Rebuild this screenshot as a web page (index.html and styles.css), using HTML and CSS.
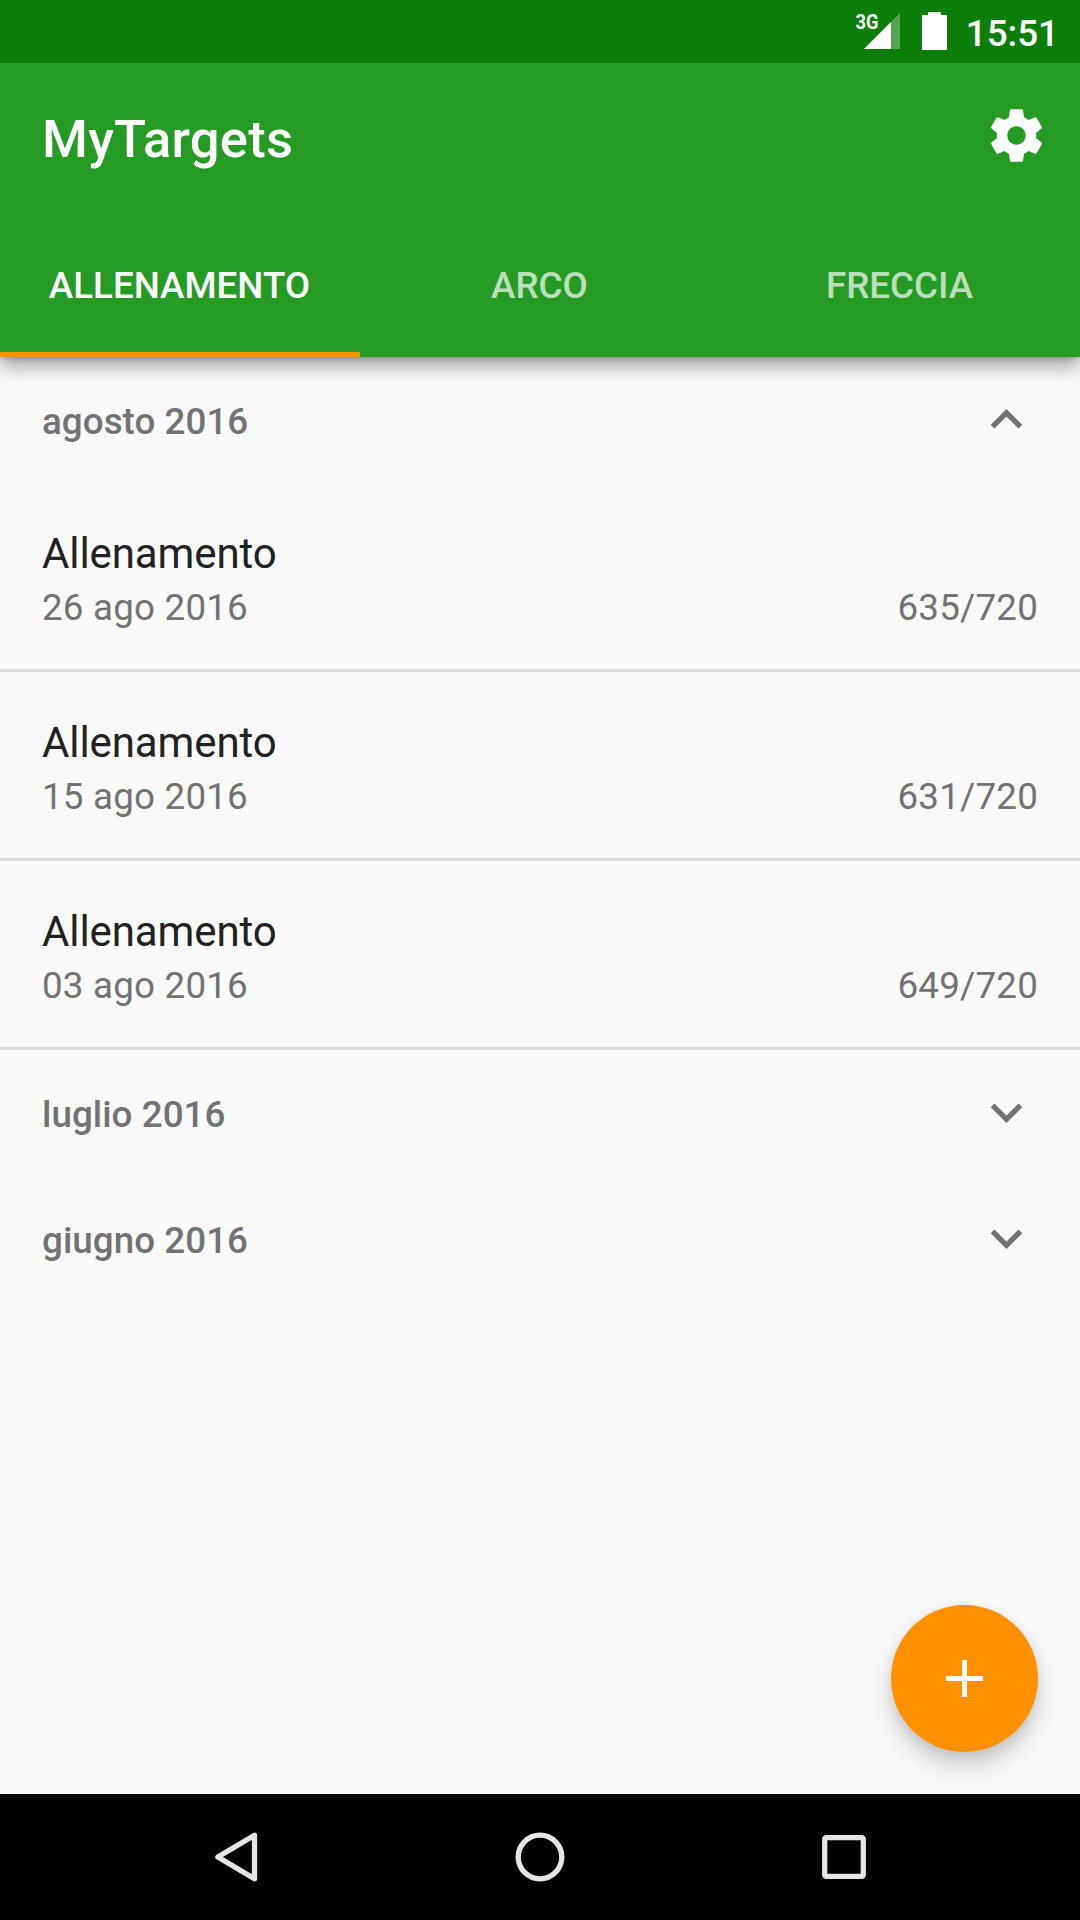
FILE: index.html
```html
<!DOCTYPE html>
<html lang="it">
<head>
<meta charset="utf-8">
<title>MyTargets</title>
<link rel="stylesheet" href="styles.css">
</head>
<body>
<div class="screen">
  <header class="header">
    <div class="status-bar">
      <svg class="signal" width="50" height="52" viewBox="-4 -12 50 52">
        <path d="M9 37 45 1V37Z" fill="#fff" fill-opacity=".3"/>
        <path d="M9 37 36 10V37Z" fill="#fff"/>
        <text class="signal-label" x="0.5" y="17" textLength="23" lengthAdjust="spacingAndGlyphs">3G</text>
      </svg>
      <svg class="battery" width="25" height="38" viewBox="0 0 25 38">
        <path d="M6 0H19V3H25V38H0V3H6Z" fill="#fff"/>
      </svg>
      <span class="clock">15:51</span>
    </div>
    <div class="toolbar">
      <h1 class="title">MyTargets</h1>
      <svg class="settings" width="63" height="63" viewBox="0 0 24 24">
        <path fill="#fff" d="M19.43 12.98c.04-.32.07-.64.07-.98s-.03-.66-.07-.98l2.11-1.65c.19-.15.24-.42.12-.64l-2-3.46c-.12-.22-.39-.3-.61-.22l-2.49 1c-.52-.4-1.08-.73-1.69-.98l-.38-2.65C14.46 2.18 14.25 2 14 2h-4c-.25 0-.46.18-.49.42l-.38 2.65c-.61.25-1.17.59-1.69.98l-2.49-1c-.23-.09-.49 0-.61.22l-2 3.46c-.13.22-.07.49.12.64l2.11 1.65c-.04.32-.07.65-.07.98s.03.66.07.98l-2.11 1.65c-.19.15-.24.42-.12.64l2 3.46c.12.22.39.3.61.22l2.49-1c.52.4 1.08.73 1.69.98l.38 2.65c.03.24.24.42.49.42h4c.25 0 .46-.18.49-.42l.38-2.65c.61-.25 1.17-.59 1.69-.98l2.49 1c.23.09.49 0 .61-.22l2-3.46c.12-.22.07-.49-.12-.64l-2.11-1.65zM12 15.5c-1.93 0-3.5-1.57-3.5-3.5s1.57-3.5 3.5-3.5 3.5 1.57 3.5 3.5-1.57 3.5-3.5 3.5z"/>
      </svg>
    </div>
    <nav class="tabs">
      <span class="tab tab-active">ALLENAMENTO</span>
      <span class="tab">ARCO</span>
      <span class="tab">FRECCIA</span>
    </nav>
  </header>

  <main class="list">
    <div class="month">
      <span>agosto 2016</span>
      <svg width="63" height="63" viewBox="0 0 24 24"><path d="M12 8l-6 6 1.41 1.41L12 10.83l4.59 4.58L18 14z"/></svg>
    </div>
    <div class="entry">
      <div class="entry-name">Allenamento</div>
      <div class="entry-info"><span>26 ago 2016</span><span>635/720</span></div>
    </div>
    <div class="entry">
      <div class="entry-name">Allenamento</div>
      <div class="entry-info"><span>15 ago 2016</span><span>631/720</span></div>
    </div>
    <div class="entry">
      <div class="entry-name">Allenamento</div>
      <div class="entry-info"><span>03 ago 2016</span><span>649/720</span></div>
    </div>
    <div class="month">
      <span>luglio 2016</span>
      <svg width="63" height="63" viewBox="0 0 24 24"><path d="M16.59 8.59L12 13.17 7.41 8.59 6 10l6 6 6-6z"/></svg>
    </div>
    <div class="month">
      <span>giugno 2016</span>
      <svg width="63" height="63" viewBox="0 0 24 24"><path d="M16.59 8.59L12 13.17 7.41 8.59 6 10l6 6 6-6z"/></svg>
    </div>
    <div class="fab">
      <svg width="37" height="37" viewBox="0 0 37 37"><path d="M16 0h5v16h16v5H21v16h-5V21H0v-5h16z" fill="#fff"/></svg>
    </div>
  </main>

  <footer class="nav-bar">
    <svg width="66" height="66" viewBox="0 0 66 66"><path d="M14.8 33 51.5 11.2V54.8Z"/></svg>
    <svg width="66" height="66" viewBox="0 0 66 66"><circle cx="33" cy="33" r="21.8"/></svg>
    <svg width="66" height="66" viewBox="0 0 66 66"><rect x="13.7" y="13.7" width="38.6" height="38.6" rx="1.5"/></svg>
  </footer>
</div>
</body>
</html>
```
FILE: styles.css
```css
* {
  box-sizing: border-box;
}

body {
  margin: 0;
  font-family: Roboto, sans-serif;
  background: #fafafa;
}

svg {
  display: block;
  flex: none;
}

.screen {
  display: flex;
  flex-direction: column;
  width: 1080px;
  height: 1920px;
  overflow: hidden;
}

.header {
  z-index: 1;
  flex: none;
  background: #259b24;
  color: #fff;
  box-shadow: 0 8px 20px rgba(0, 0, 0, .4), 0 1px 6px rgba(0, 0, 0, .2);
}

.status-bar {
  display: flex;
  justify-content: flex-end;
  align-items: flex-start;
  height: 63px;
  padding: 12px 21px 0 0;
  background: #0a7e07;
}

.signal {
  margin: -12px 21px 0 0;
}

.signal-label {
  fill: #fff;
  font-size: 21px;
  font-weight: 700;
}

.clock {
  margin-left: 19px;
  font-size: 36.75px;
  font-weight: 500;
  line-height: 43px;
}

.toolbar {
  display: flex;
  justify-content: space-between;
  align-items: center;
  height: 147px;
  padding: 0 32px 2px 42px;
}

.title {
  margin: 0;
  padding-top: 6px;
  font-size: 52.5px;
  font-weight: 500;
  line-height: 62px;
  letter-spacing: .25px;
}

.tabs {
  display: grid;
  grid-template-columns: repeat(3, 1fr);
  height: 147px;
}

.tab {
  padding: 54px 1px 0 0;
  font-size: 36.75px;
  font-weight: 500;
  line-height: 44px;
  text-align: center;
  color: rgba(255, 255, 255, .7);
}

.tab-active {
  color: #fff;
  border-bottom: 5px solid #ff9100;
}

.list {
  position: relative;
  flex: 1;
}

.month {
  display: flex;
  justify-content: space-between;
  align-items: center;
  height: 126px;
  padding: 0 42px;
  font-size: 36.75px;
  font-weight: 500;
  letter-spacing: .05px;
  color: #727272;
}

.month span {
  padding-top: 3px;
}

.month svg {
  margin-bottom: 1px;
  fill: #727272;
}

.entry {
  display: flex;
  flex-direction: column;
  gap: 7px;
  height: 189px;
  padding: 46px 42px 0;
  border-bottom: 3px solid #dbdbdb;
}

.entry-name {
  font-size: 42px;
  line-height: 50px;
  letter-spacing: -.1px;
  color: #212121;
}

.entry-info {
  display: flex;
  justify-content: space-between;
  font-size: 36.75px;
  line-height: 44px;
  letter-spacing: .2px;
  color: #727272;
}

.fab {
  position: absolute;
  right: 42px;
  bottom: 42px;
  display: flex;
  justify-content: center;
  align-items: center;
  width: 147px;
  height: 147px;
  border-radius: 50%;
  background: #ff9100;
  box-shadow: 0 14px 26px rgba(0, 0, 0, .2), 0 2px 10px rgba(0, 0, 0, .08);
}

.nav-bar {
  z-index: 1;
  display: grid;
  grid-template-columns: repeat(3, 304px);
  justify-content: center;
  justify-items: center;
  align-items: center;
  flex: none;
  height: 126px;
  background: #000;
}

.nav-bar svg {
  fill: none;
  stroke: #e6e6e6;
  stroke-width: 5.3px;
  stroke-linejoin: round;
}
```
